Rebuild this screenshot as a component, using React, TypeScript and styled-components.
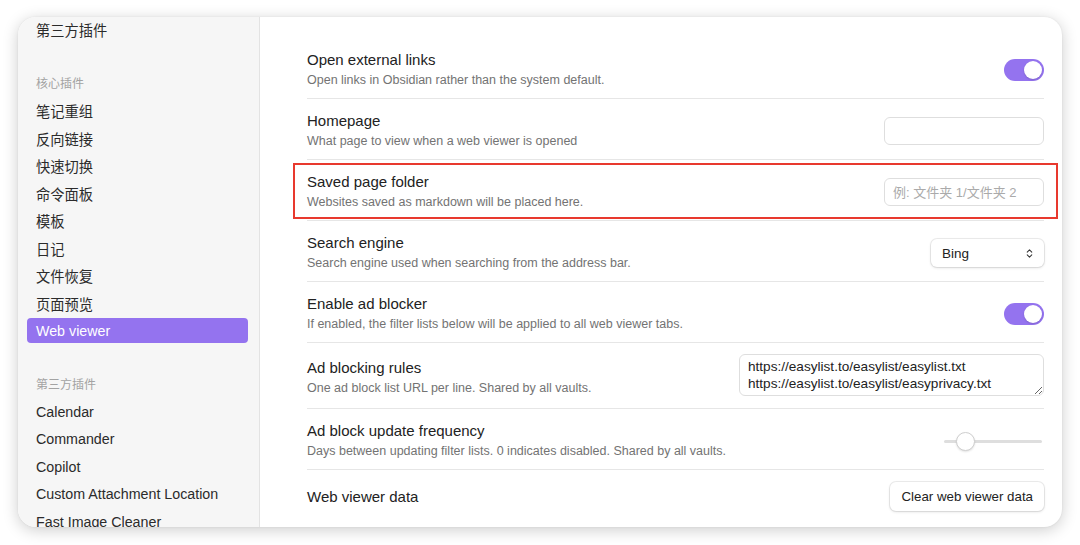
import { ReactNode } from "react";
import styled, { createGlobalStyle } from "styled-components";
import { ChevronsUpDown } from "lucide-react";

const GlobalStyle = createGlobalStyle`
  html, body {
    margin: 0;
    padding: 0;
    background: #ffffff;
  }
  body {
    font-family: "Liberation Sans", "Noto Sans CJK SC", sans-serif;
    -webkit-font-smoothing: antialiased;
  }
  * {
    box-sizing: border-box;
  }
`;

const Page = styled.div`
  width: 1080px;
  height: 545px;
  padding: 17px 18px 18px 18px;
  overflow: hidden;
`;

const Window = styled.div`
  display: flex;
  height: 510px;
  border-radius: 18px;
  overflow: hidden;
  background: #ffffff;
  box-shadow: 0 3px 16px rgba(0, 0, 0, 0.2), 0 0 2px rgba(0, 0, 0, 0.08);
`;

const Sidebar = styled.nav`
  width: 242px;
  flex-shrink: 0;
  background: #f6f6f6;
  border-right: 1px solid #e3e3e3;
  padding: 0 11px 0 9px;
  overflow: hidden;
`;

const NavHeader = styled.div`
  padding: 31px 9px 6.5px;
  line-height: 16px;
  font-size: 12px;
  color: #a3a3a3;
`;

const NavItem = styled.div<{ $active?: boolean }>`
  height: 25px;
  margin-bottom: 2.5px;
  padding: 0 9px;
  display: flex;
  align-items: center;
  border-radius: 4px;
  font-size: 14.25px;
  white-space: nowrap;
  color: ${(props) => (props.$active ? "#ffffff" : "#2b2b2b")};
  background: ${(props) => (props.$active ? "#9473ef" : "transparent")};
`;

const Content = styled.main`
  flex: 1;
  padding: 21px 18px 0 47px;
  overflow: hidden;
`;

const Row = styled.div<{ $highlight?: boolean }>`
  position: relative;
  display: flex;
  align-items: center;
  gap: 20px;
  padding: 12px 0 8px;
  border-top: 1px solid #e6e6e6;

  &:first-child {
    border-top: none;
  }

  ${(props) =>
    props.$highlight &&
    `
    &::after {
      content: "";
      position: absolute;
      top: 3px;
      bottom: 1px;
      left: -14px;
      right: -14px;
      border: 2px solid #e8392e;
      pointer-events: none;
    }
  `}
`;

const Info = styled.div`
  flex: 1;
  min-width: 0;
`;

const Title = styled.div`
  font-size: 15px;
  line-height: 20px;
  color: #222222;
`;

const Desc = styled.div`
  font-size: 12.5px;
  line-height: 20px;
  color: #737373;
`;

const Control = styled.div`
  display: flex;
  align-items: center;
  flex-shrink: 0;
`;

const Toggle = styled.div<{ $on?: boolean }>`
  width: 40px;
  height: 22px;
  border-radius: 11px;
  padding: 2px;
  display: flex;
  justify-content: ${(props) => (props.$on ? "flex-end" : "flex-start")};
  background: ${(props) => (props.$on ? "#9473ef" : "#d8d8d8")};

  &::before {
    content: "";
    width: 18px;
    height: 18px;
    border-radius: 50%;
    background: #ffffff;
    box-shadow: 0 1px 2px rgba(0, 0, 0, 0.15);
  }
`;

const TextInput = styled.input`
  width: 160px;
  height: 28px;
  padding: 0 8px;
  border: 1px solid #dedede;
  border-radius: 6px;
  background: #ffffff;
  font-family: inherit;
  font-size: 13px;
  color: #222;
  outline: none;

  &::placeholder {
    color: #aaaaaa;
  }
`;

const Select = styled.div`
  width: 113px;
  height: 28px;
  padding: 0 9px 0 11px;
  display: flex;
  align-items: center;
  justify-content: space-between;
  border-radius: 6px;
  background: #ffffff;
  box-shadow: 0 0 0 1px rgba(0, 0, 0, 0.07), 0 1px 3px rgba(0, 0, 0, 0.12);
  font-size: 13.5px;
  color: #222;
`;

const TextArea = styled.textarea`
  width: 305px;
  height: 42px;
  margin: -1px 0 4px;
  padding: 4px 8px;
  border: 1px solid #dedede;
  border-radius: 6px;
  background: #ffffff;
  font-family: inherit;
  font-size: 13.6px;
  line-height: 16.5px;
  color: #222;
  resize: vertical;
  outline: none;
  overflow: hidden;
`;

const SliderTrack = styled.div`
  position: relative;
  width: 98px;
  height: 3px;
  margin-right: 2px;
  border-radius: 2px;
  background: #dedede;
`;

const SliderThumb = styled.div`
  position: absolute;
  top: 50%;
  width: 19px;
  height: 19px;
  margin: -9.5px 0 0 -9.5px;
  border-radius: 50%;
  background: #ffffff;
  border: 1px solid #cfcfcf;
  box-shadow: 0 1px 2px rgba(0, 0, 0, 0.12);
`;

const Button = styled.button`
  height: 29px;
  padding: 0 11px;
  border: none;
  border-radius: 6px;
  background: #ffffff;
  box-shadow: 0 0 0 1px rgba(0, 0, 0, 0.07), 0 1px 3px rgba(0, 0, 0, 0.12);
  font-family: inherit;
  font-size: 13.3px;
  color: #222;
`;

interface SettingProps {
  title: string;
  desc?: string;
  highlight?: boolean;
  children?: ReactNode;
}

const Setting = ({ title, desc, highlight, children }: SettingProps) => (
  <Row $highlight={highlight}>
    <Info>
      <Title>{title}</Title>
      {desc && <Desc>{desc}</Desc>}
    </Info>
    <Control>{children}</Control>
  </Row>
);

const Slider = ({ value }: { value: number }) => (
  <SliderTrack>
    <SliderThumb style={{ left: `${value}%` }} />
  </SliderTrack>
);

const corePlugins = [
  "笔记重组",
  "反向链接",
  "快速切换",
  "命令面板",
  "模板",
  "日记",
  "文件恢复",
  "页面预览",
  "Web viewer",
];

const communityPlugins = [
  "Calendar",
  "Commander",
  "Copilot",
  "Custom Attachment Location",
  "Fast Image Cleaner",
];

export default function App() {
  return (
    <>
      <GlobalStyle />
      <Page>
        <Window>
          <Sidebar>
            <NavItem>第三方插件</NavItem>
            <NavHeader>核心插件</NavHeader>
            {corePlugins.map((name) => (
              <NavItem key={name} $active={name === "Web viewer"}>
                {name}
              </NavItem>
            ))}
            <NavHeader>第三方插件</NavHeader>
            {communityPlugins.map((name) => (
              <NavItem key={name}>{name}</NavItem>
            ))}
          </Sidebar>
          <Content>
            <Setting
              title="Open external links"
              desc="Open links in Obsidian rather than the system default."
            >
              <Toggle $on />
            </Setting>
            <Setting
              title="Homepage"
              desc="What page to view when a web viewer is opened"
            >
              <TextInput type="text" />
            </Setting>
            <Setting
              title="Saved page folder"
              desc="Websites saved as markdown will be placed here."
              highlight
            >
              <TextInput type="text" placeholder="例: 文件夹 1/文件夹 2" />
            </Setting>
            <Setting
              title="Search engine"
              desc="Search engine used when searching from the address bar."
            >
              <Select>
                <span>Bing</span>
                <ChevronsUpDown size={11} strokeWidth={2.2} color="#333" />
              </Select>
            </Setting>
            <Setting
              title="Enable ad blocker"
              desc="If enabled, the filter lists below will be applied to all web viewer tabs."
            >
              <Toggle $on />
            </Setting>
            <Setting
              title="Ad blocking rules"
              desc="One ad block list URL per line. Shared by all vaults."
            >
              <TextArea
                readOnly
                spellCheck={false}
                value={
                  "https://easylist.to/easylist/easylist.txt\nhttps://easylist.to/easylist/easyprivacy.txt"
                }
              />
            </Setting>
            <Setting
              title="Ad block update frequency"
              desc="Days between updating filter lists. 0 indicates disabled. Shared by all vaults."
            >
              <Slider value={22} />
            </Setting>
            <Setting title="Web viewer data">
              <Button>Clear web viewer data</Button>
            </Setting>
          </Content>
        </Window>
      </Page>
    </>
  );
}
